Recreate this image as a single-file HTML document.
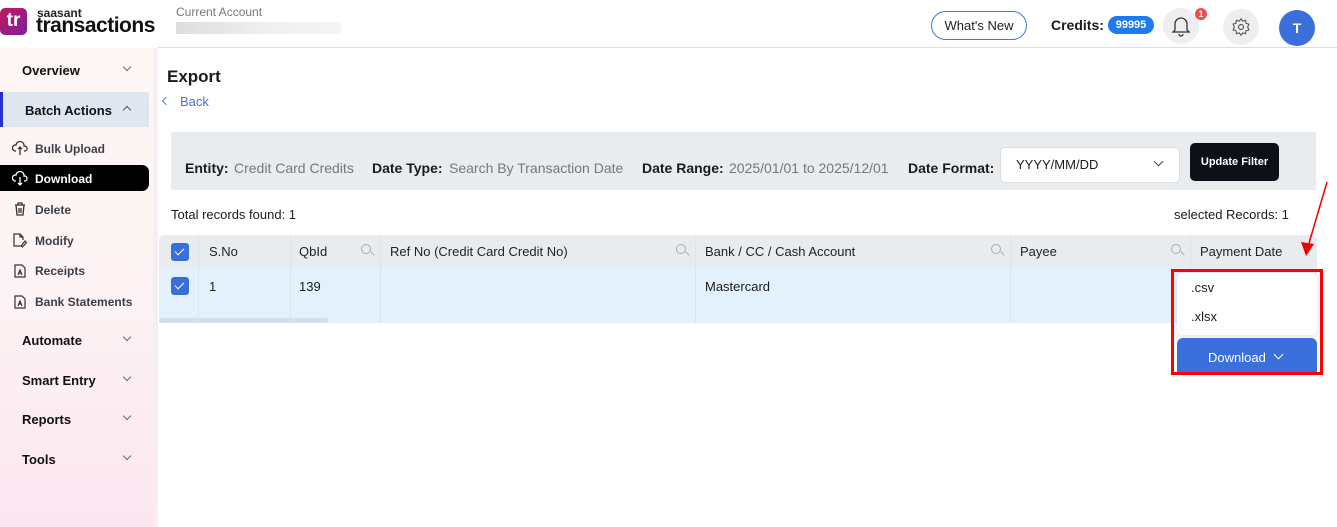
<!DOCTYPE html>
<html><head><meta charset="utf-8"><style>
*{box-sizing:border-box;margin:0;padding:0}
body{width:1337px;height:527px;overflow:hidden;background:#fff;font-family:"Liberation Sans",sans-serif;color:#1b1b1b;position:relative}
.abs{position:absolute}
.side{left:0;top:48px;width:153px;height:479px;background:linear-gradient(#fdf6f5,#fdf3f4 50%,#fbe6ef)}
.sep{left:153px;top:48px;width:5px;height:479px;background:#f6eef2}
.nav{position:absolute;left:22px;font-size:13px;font-weight:bold;color:#111}
.chev{position:absolute;left:124px;width:6px;height:6px;border-right:1.2px solid #666;border-bottom:1.2px solid #666;transform:rotate(45deg)}
.sub{position:absolute;left:35px;font-size:12px;font-weight:bold;color:#3b3f4a}
.ic{position:absolute;left:12px}
.th{position:absolute;top:235px;height:33px;line-height:33px;font-size:13px;color:#222}
.vd{position:absolute;top:235px;width:1px;height:88px;background:#dde3ea}
.cb{position:absolute;width:18px;height:18px;background:#3a6fdb;border-radius:3px}
.cb:after{content:"";position:absolute;left:6px;top:3px;width:4px;height:8px;border-right:1.5px solid #fff;border-bottom:1.5px solid #fff;transform:rotate(45deg)}
.mag{position:absolute;top:244px;width:10px;height:10px;border:1.3px solid #aaa;border-radius:50%}
.mag:after{content:"";position:absolute;left:8px;top:8px;width:5px;height:1.3px;background:#aaa;transform:rotate(45deg)}
.fl{position:absolute;top:160px;font-size:14px;white-space:nowrap}
.fl b{color:#1b1b1b}
.fv{position:absolute;top:160px;font-size:14px;white-space:nowrap;color:#777}
</style></head><body>
<!-- header -->
<div class="abs" style="left:0;top:8px;width:27px;height:27px;border-radius:5px;background:linear-gradient(135deg,#c2185b,#7b1fa2);color:#fff;font-weight:bold;font-size:19px;line-height:25px;text-align:center">tr</div>
<div class="abs" style="left:37px;top:6px;font-size:12px;font-weight:bold;color:#222">saasant</div>
<div class="abs" style="left:36px;top:14px;font-size:21px;color:#111;font-weight:bold;letter-spacing:-0.5px">transactions</div>
<div class="abs" style="left:176px;top:5px;font-size:12px;color:#777">Current Account</div>
<div class="abs" style="left:176px;top:22px;width:165px;height:12px;background:linear-gradient(90deg,#ddd,#eee,#f5f5f5)"></div>
<div class="abs" style="left:158px;top:47px;width:1179px;height:1px;background:#ddd"></div>
<div class="abs" style="left:931px;top:11px;width:96px;height:29px;border:1px solid #3a7be0;border-radius:15px;font-size:13px;line-height:27px;text-align:center;color:#222">What's New</div>
<div class="abs" style="left:1051px;top:17px;font-size:14px;font-weight:bold">Credits:</div>
<div class="abs" style="left:1108px;top:16px;width:46px;height:18px;background:#1e7bef;border-radius:9px;color:#fff;font-size:11px;font-weight:bold;line-height:18px;text-align:center">99995</div>
<div class="abs" style="left:1163px;top:8px;width:36px;height:36px;border-radius:50%;background:#eceeef"></div>
<svg class="abs" style="left:1171px;top:15px" width="20" height="22" viewBox="0 0 20 22"><path d="M4 15V9a6 6 0 0 1 12 0v6l2 2H2z M8 19a2 2 0 0 0 4 0" fill="none" stroke="#333" stroke-width="1.3"/></svg>
<div class="abs" style="left:1195px;top:8px;width:12px;height:12px;border-radius:50%;background:#f04b4b;color:#fff;font-size:9px;font-weight:bold;line-height:12px;text-align:center">1</div>
<div class="abs" style="left:1223px;top:9px;width:36px;height:36px;border-radius:50%;background:#eceeef"></div>
<svg class="abs" style="left:1231px;top:17px" width="20" height="20" viewBox="0 0 24 24"><circle cx="12" cy="12" r="3" fill="none" stroke="#555" stroke-width="1.4"/><path d="M12 2l2 3 3.5-1 .5 3.5 3.5 1-1.5 3.5 1.5 3.5-3.5 1-.5 3.5-3.5-1-2 3-2-3-3.5 1-.5-3.5-3.5-1L4 12 2.5 8.5l3.5-1L6.5 4 10 5z" fill="none" stroke="#555" stroke-width="1.3"/></svg>
<div class="abs" style="left:1279px;top:10px;width:36px;height:36px;border-radius:50%;background:#3b6fdc;color:#fff;font-size:14px;font-weight:bold;line-height:36px;text-align:center">T</div>

<!-- sidebar -->
<div class="abs side"></div><div class="abs sep"></div>
<div class="nav" style="top:63px">Overview</div><div class="chev" style="top:64px"></div>
<div class="abs" style="left:0;top:92px;width:149px;height:35px;background:#dfe6f0"></div>
<div class="abs" style="left:0;top:92px;width:3px;height:35px;background:#2a2fd0"></div>
<div class="nav" style="top:103px;left:25px">Batch Actions</div>
<div class="abs" style="left:124px;top:107px;width:6px;height:6px;border-left:1.3px solid #555;border-top:1.3px solid #555;transform:rotate(45deg)"></div>
<div class="sub" style="top:142px">Bulk Upload</div>
<div class="abs" style="left:0;top:165px;width:149px;height:26px;background:#000;border-radius:0 7px 7px 0"></div>
<div class="sub" style="top:172px;color:#fff">Download</div>
<div class="sub" style="top:203px">Delete</div>
<div class="sub" style="top:234px">Modify</div>
<div class="sub" style="top:264px">Receipts</div>
<div class="sub" style="top:295px">Bank Statements</div>
<svg class="ic" style="top:140px" width="16" height="16" viewBox="0 0 16 16"><path d="M4 11H3a3 3 0 0 1 1-6 4 4 0 0 1 8 1 2.5 2.5 0 0 1 1 5h-1M8 7v8M6 9l2-2 2 2" fill="none" stroke="#333" stroke-width="1.3"/></svg>
<svg class="ic" style="top:170px" width="16" height="16" viewBox="0 0 16 16"><path d="M4 11H3a3 3 0 0 1 1-6 4 4 0 0 1 8 1 2.5 2.5 0 0 1 1 5h-1M8 7v8M6 13l2 2 2-2" fill="none" stroke="#fff" stroke-width="1.3"/></svg>
<svg class="ic" style="top:201px" width="16" height="16" viewBox="0 0 16 16"><path d="M3 4h10M6 4V2h4v2M4 4l1 10h6l1-10M7 7v5M9 7v5" fill="none" stroke="#333" stroke-width="1.3"/></svg>
<svg class="ic" style="top:232px" width="16" height="16" viewBox="0 0 16 16"><path d="M9 14H2V2h6l3 3v3M8 2v3h3M9 14l4-5 1.5 1.5-4 4.5z" fill="none" stroke="#333" stroke-width="1.2"/></svg>
<svg class="ic" style="top:263px" width="16" height="16" viewBox="0 0 16 16"><path d="M3 2h7l3 3v9H3zM6 12l2-5 2 5M6.5 10h3" fill="none" stroke="#333" stroke-width="1.2"/></svg>
<svg class="ic" style="top:294px" width="16" height="16" viewBox="0 0 16 16"><path d="M3 2h7l3 3v9H3zM6 12l2-5 2 5M6.5 10h3" fill="none" stroke="#333" stroke-width="1.2"/></svg>
<div class="nav" style="top:333px">Automate</div><div class="chev" style="top:334px"></div>
<div class="nav" style="top:373px">Smart Entry</div><div class="chev" style="top:374px"></div>
<div class="nav" style="top:412px">Reports</div><div class="chev" style="top:413px"></div>
<div class="nav" style="top:452px">Tools</div><div class="chev" style="top:453px"></div>

<!-- main -->
<div class="abs" style="left:167px;top:67px;font-size:17px;font-weight:bold">Export</div>
<div class="abs" style="left:163px;top:98px;width:6px;height:6px;border-left:1.3px solid #5a7ee0;border-bottom:1.3px solid #5a7ee0;transform:rotate(45deg)"></div>
<div class="abs" style="left:180px;top:94px;font-size:13px;color:#4a6fd8">Back</div>
<div class="abs" style="left:171px;top:132px;width:1145px;height:58px;background:#e9ecef"></div>
<div class="fl" style="left:185px"><b>Entity:</b></div><div class="fv" style="left:234px">Credit Card Credits</div>
<div class="fl" style="left:372px"><b>Date Type:</b></div><div class="fv" style="left:449px">Search By Transaction Date</div>
<div class="fl" style="left:642px"><b>Date Range:</b></div><div class="fv" style="left:729px">2025/01/01 to 2025/12/01</div>
<div class="fl" style="left:908px"><b>Date Format:</b></div>
<div class="abs" style="left:1000px;top:147px;width:180px;height:36px;background:#fff;border:1px solid #ddd;border-radius:5px;font-size:13px;line-height:34px;padding-left:15px">YYYY/MM/DD</div>
<div class="abs" style="left:1155px;top:158px;width:7px;height:7px;border-right:1.3px solid #444;border-bottom:1.3px solid #444;transform:rotate(45deg)"></div>
<div class="abs" style="left:1190px;top:143px;width:89px;height:38px;background:#0d1117;border-radius:5px;color:#fff;font-size:11px;font-weight:bold;line-height:38px;text-align:center">Update Filter</div>
<div class="abs" style="left:171px;top:207px;font-size:13px">Total records found: 1</div>
<div class="abs" style="left:1174px;top:207px;font-size:13px">selected Records: 1</div>

<div class="abs" style="left:159px;top:235px;width:1158px;height:33px;background:#e9ecef;border-radius:5px 5px 0 0"></div>
<div class="abs" style="left:159px;top:268px;width:1158px;height:55px;background:#e3f1fd"></div>
<div class="abs" style="left:159px;top:318px;width:169px;height:5px;background:#d3dfe8;border-radius:3px"></div>
<div class="vd" style="left:198px"></div><div class="vd" style="left:290px"></div><div class="vd" style="left:380px"></div><div class="vd" style="left:695px"></div><div class="vd" style="left:1010px"></div><div class="vd" style="left:1190px;height:33px"></div>
<div class="cb" style="left:171px;top:243px"></div>
<div class="cb" style="left:171px;top:277px"></div>
<div class="th" style="left:209px">S.No</div>
<div class="th" style="left:299px">QbId</div>
<div class="th" style="left:390px">Ref No (Credit Card Credit No)</div>
<div class="th" style="left:705px">Bank / CC / Cash Account</div>
<div class="th" style="left:1020px">Payee</div>
<div class="th" style="left:1200px">Payment Date</div>
<div class="mag" style="left:361px"></div><div class="mag" style="left:676px"></div><div class="mag" style="left:991px"></div><div class="mag" style="left:1171px"></div>
<div class="abs" style="left:209px;top:279px;font-size:13px">1</div>
<div class="abs" style="left:299px;top:279px;font-size:13px">139</div>
<div class="abs" style="left:705px;top:279px;font-size:13px">Mastercard</div>

<!-- dropdown -->
<div class="abs" style="left:1177px;top:273px;width:140px;height:62px;background:#fff;border-radius:6px;box-shadow:0 2px 8px rgba(0,0,0,.12)"></div>
<div class="abs" style="left:1191px;top:280px;font-size:13px">.csv</div>
<div class="abs" style="left:1191px;top:309px;font-size:13px">.xlsx</div>
<div class="abs" style="left:1177px;top:338px;width:140px;height:34px;background:#3b6fdc;border-radius:6px 6px 0 0;color:#fff;font-size:13px;line-height:40px;padding-left:31px">Download</div>
<div class="abs" style="left:1275px;top:351px;width:7px;height:7px;border-right:1.3px solid #fff;border-bottom:1.3px solid #fff;transform:rotate(45deg)"></div>
<div class="abs" style="left:1171px;top:269px;width:152px;height:106px;border:3px solid #f00"></div>
<svg class="abs" style="left:1295px;top:180px" width="40" height="80" viewBox="0 0 40 80"><path d="M32 2L12 70" stroke="#e00" stroke-width="1.5"/><path d="M6 62l5 14 8-12z" fill="#e00"/></svg>
</body></html>
